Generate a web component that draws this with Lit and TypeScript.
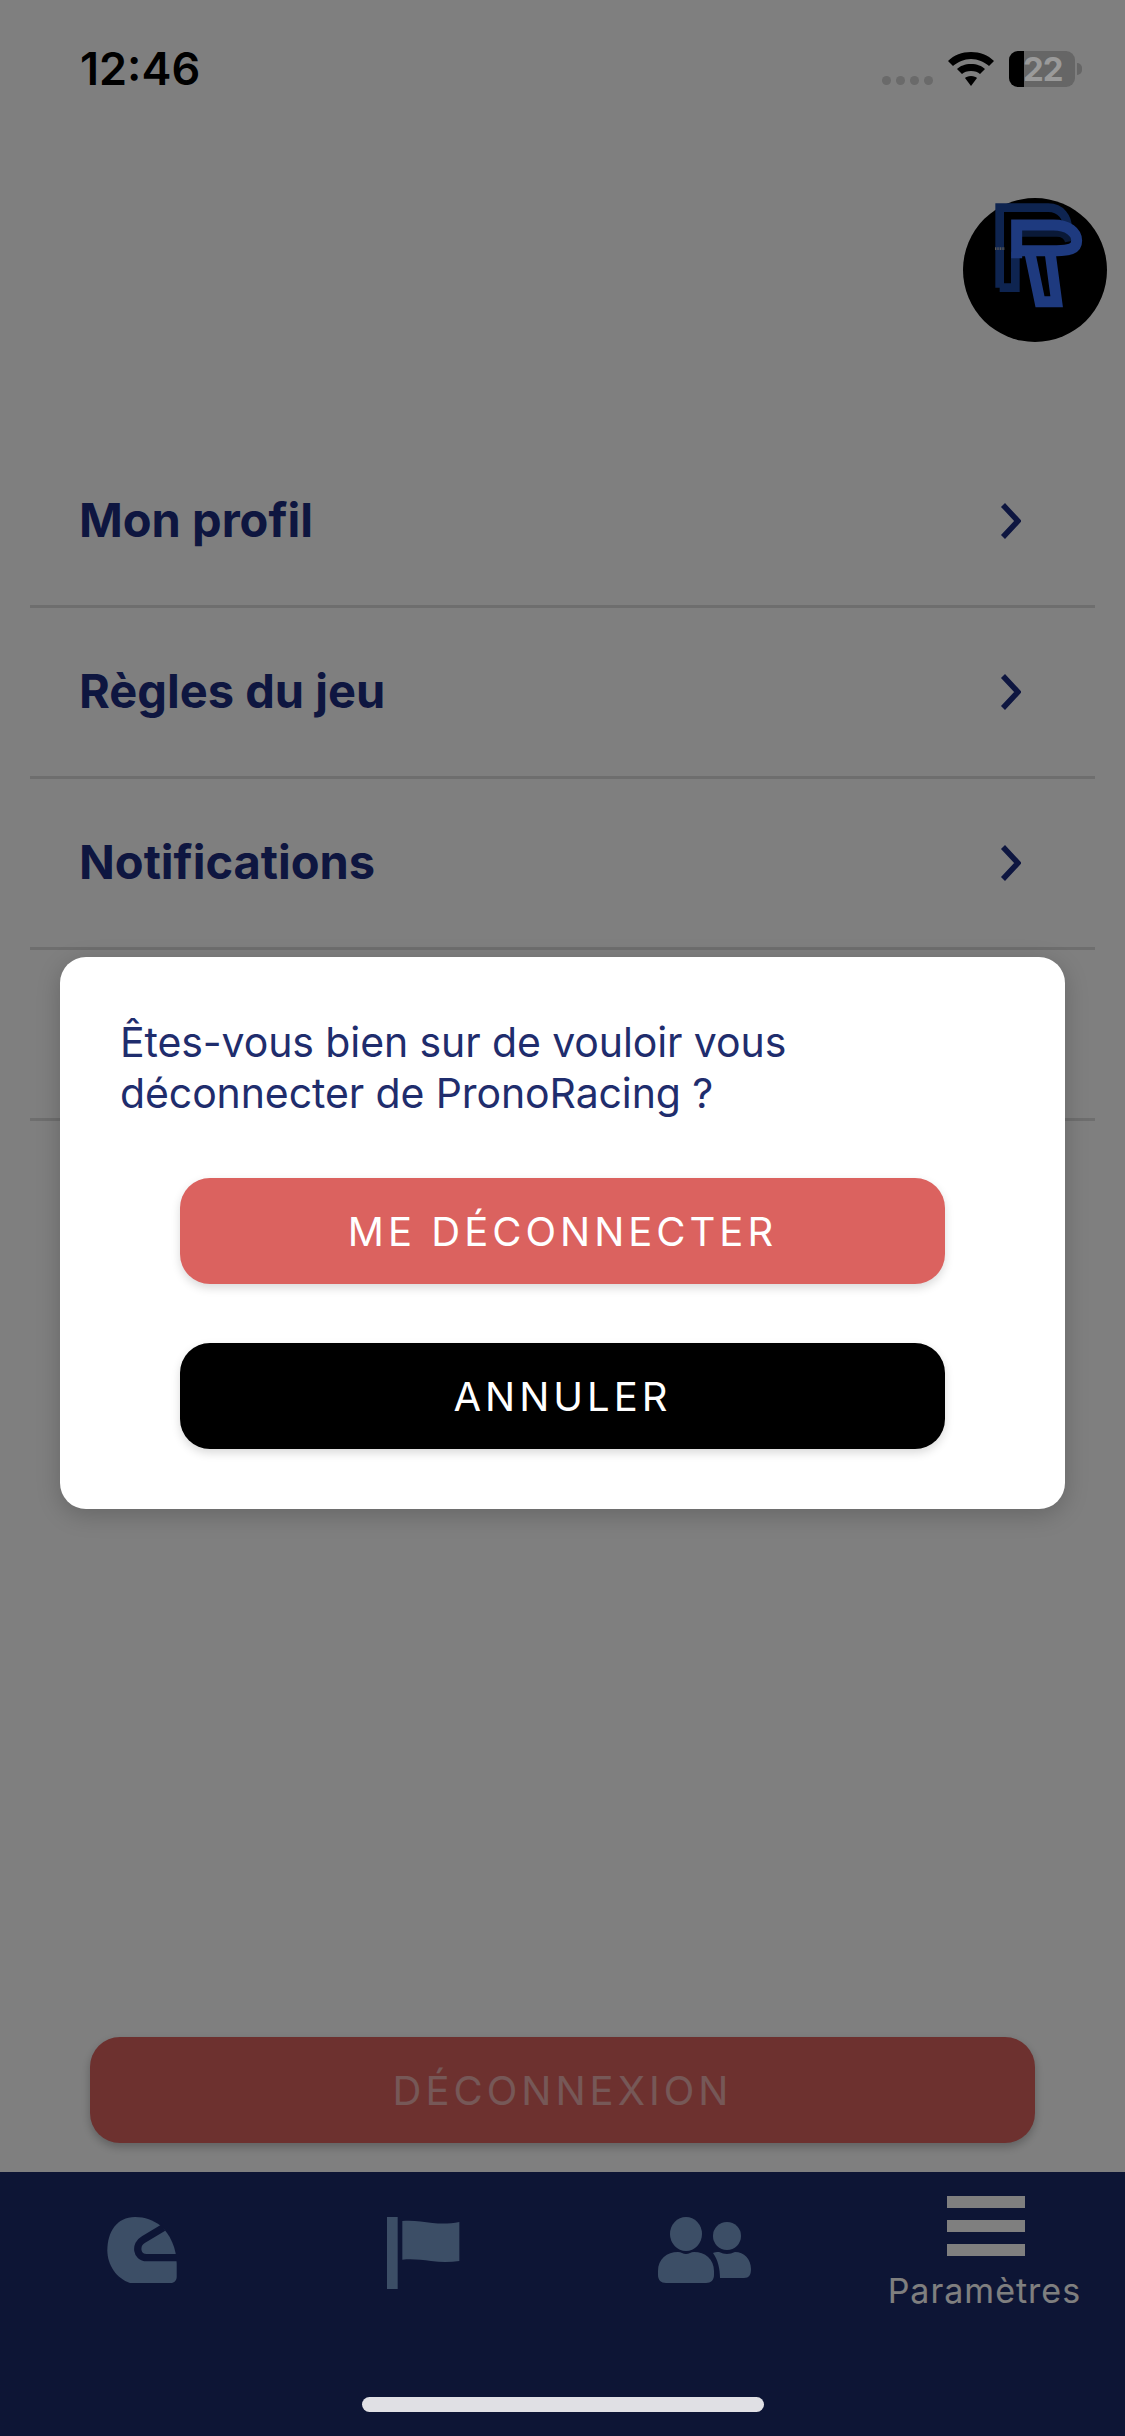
import { LitElement, css, html, svg } from "lit"
import { customElement } from "lit/decorators.js"

const menu = ["Mon profil", "Règles du jeu", "Notifications", ""]

// visor band is cut out with the bar colour
const helmet = svg`
  <path d="M165 140C110 140 82 185 82 240c0 45 28 85 68 98h122c11 0 18-8 18-18v-40c0-45-20-90-50-115-20-15-45-25-75-25Z" fill="#799ccc" />
  <path d="M250 172l-60 36c-25 14-22 54 10 54h95" fill="none" stroke="#1b2a6b" stroke-width="22" />
`

const flag = svg`
  <rect x="921" y="140" width="32" height="216" />
  <path d="M967 152c30-3 60 2 90 6 30 3 55 2 81-3v117c-28 4-55 4-85 0-30-4-58-7-86-4Z" />
`

const people = svg`
  <ellipse cx="28" cy="17" rx="16" ry="17" />
  <circle cx="69" cy="19" r="14" />
  <path d="M0 54c0-12 9-19 20-19 3 0 5 2 8 2s5-2 8-2c11 0 20 7 20 19v4c0 5-3 8-8 8H8c-5 0-8-3-8-8Z" />
  <path d="M55 36c2-1 3-1 6-1 3 1 5 2 8 2s5-1 8-2c9 0 16 7 16 17 0 6-2 9-7 9H62c0-9-2-18-7-25Z" />
`

@customElement("app-root")
export class AppRoot extends LitElement {
  static styles = css`
    :host {
      display: block;
      position: relative;
      width: 1125px;
      height: 2436px;
      overflow: hidden;
      background: #fff;
      font-family: Inter, "Liberation Sans", sans-serif;
    }

    .screen {
      display: flex;
      flex-direction: column;
      height: 100%;
    }

    .status {
      display: flex;
      justify-content: space-between;
      align-items: center;
      height: 87px;
      padding: 25px 43px 0 80px;
      margin-bottom: -7px;
    }
    .time {
      font-size: 45px;
      font-weight: 600;
      line-height: 44px;
      color: #000;
    }
    /* these stay lit above the dimming layer */
    .status-icons {
      position: relative;
      z-index: 2;
      display: flex;
      align-items: center;
      gap: 15px;
    }
    .dots {
      display: flex;
      gap: 5px;
      align-self: flex-end;
      margin-bottom: 2px;
    }
    .dots i {
      width: 9px;
      height: 9px;
      border-radius: 50%;
      background: #6a6a6a;
    }
    .battery {
      display: flex;
      align-items: center;
      gap: 2px;
    }
    .battery-body {
      position: relative;
      width: 66px;
      height: 36px;
      border-radius: 9px;
      background: #666;
      padding-left: 14px;
      box-sizing: border-box;
      font-size: 33px;
      font-weight: 700;
      letter-spacing: -1px;
      color: #9a9a9a;
      line-height: 37px;
      white-space: nowrap;
    }
    .battery-body::before {
      content: "";
      position: absolute;
      left: 0;
      top: 0;
      bottom: 0;
      width: 15px;
      border-radius: 9px 0 0 9px;
      background: #000;
    }
    .battery-body span {
      position: relative;
    }
    .battery-nub {
      width: 5px;
      height: 12px;
      border-radius: 0 6px 6px 0;
      background: #666;
    }

    .top {
      display: flex;
      justify-content: flex-end;
      padding: 93px 18px 0 0;
    }
    .avatar {
      display: block;
      width: 144px;
      height: 144px;
    }

    .menu {
      margin: 95px 30px 0;
    }
    .row {
      display: flex;
      align-items: center;
      justify-content: space-between;
      box-sizing: border-box;
      height: 171px;
      padding: 0 74px 0 49px;
      border-bottom: 3px solid #dcdcdc;
      font-size: 47px;
      font-weight: 700;
      color: #1c2c80;
    }
    .row span {
      margin-bottom: 3px;
    }
    .row svg {
      display: block;
      width: 21px;
      height: 36px;
    }

    .logout {
      margin: auto 90px 29px;
      height: 106px;
      border-radius: 30px;
      background: #db625f;
      box-shadow: 0 4px 10px rgba(0, 0, 0, 0.25);
      display: flex;
      align-items: center;
      justify-content: center;
      font-size: 40px;
      font-weight: 400;
      letter-spacing: 4px;
      color: rgba(255, 255, 255, 0.5);
    }

    .tabs {
      display: grid;
      grid-template-columns: repeat(4, 1fr);
      height: 264px;
      background: #1b2a6b;
    }
    .tab {
      display: flex;
      flex-direction: column;
      align-items: center;
      padding: 45px 0 0 3px;
    }
    .tab svg {
      display: block;
      fill: #799ccc;
    }
    .tab.active {
      padding: 24px 0 0;
      color: #fff;
      font-size: 34px;
      line-height: 44px;
      letter-spacing: 1px;
    }
    .burger {
      display: flex;
      flex-direction: column;
      gap: 12px;
      width: 78px;
      margin: 0 0 13px 3px;
    }
    .burger i {
      height: 12px;
      background: #fff;
    }

    .overlay {
      position: absolute;
      inset: 0;
      z-index: 1;
      display: flex;
      flex-direction: column;
      padding: 957px 60px 0;
      background: rgba(0, 0, 0, 0.5);
    }
    .dialog {
      box-sizing: border-box;
      height: 552px;
      padding: 60px 60px 0;
      border-radius: 26px;
      background: #fff;
      box-shadow: 0 6px 24px rgba(0, 0, 0, 0.2);
    }
    .dialog p {
      margin: 0 0 59px;
      font-size: 41px;
      line-height: 51px;
      letter-spacing: -0.1px;
      color: #1f2d6d;
    }
    .actions {
      display: flex;
      flex-direction: column;
      gap: 59px;
      padding: 0 60px;
    }
    .btn {
      all: unset;
      display: flex;
      align-items: center;
      justify-content: center;
      height: 106px;
      border-radius: 30px;
      font-size: 40px;
      font-weight: 400;
      letter-spacing: 4px;
      color: #fff;
      box-shadow: 0 4px 10px rgba(0, 0, 0, 0.15);
    }
    .btn.danger {
      background: #db625f;
    }
    .btn.cancel {
      background: #000;
    }

    .home {
      position: absolute;
      z-index: 2;
      left: 362px;
      top: 2397px;
      width: 402px;
      height: 15px;
      border-radius: 8px;
      background: #e0e0e4;
    }
  `

  render() {
    return html`
      <div class="screen">
        <div class="status">
          <span class="time">12:46</span>
          <div class="status-icons">
            <div class="dots"><i></i><i></i><i></i><i></i></div>
            <svg width="46" height="34" viewBox="0 0 46 34">
              <path d="M23 0C14 0 6 3 0 9l5 5c5-4 11-7 18-7s13 3 18 7l5-5C40 3 32 0 23 0Z" />
              <path d="M23 12c-6 0-11 2-14 5l5 5c2-2 5-3 9-3s7 1 9 3l5-5c-3-3-8-5-14-5Z" />
              <path d="M23 24c-3 0-5 1-6 2l6 8 6-8c-1-1-3-2-6-2Z" />
            </svg>
            <div class="battery">
              <div class="battery-body"><span>22</span></div>
              <div class="battery-nub"></div>
            </div>
          </div>
        </div>

        <div class="top">
          <svg class="avatar" viewBox="0 0 144 144">
            <circle cx="72" cy="72" r="72" fill="#000" />
            <g transform="translate(22 -3) scale(.3333)" fill="none">
              <g stroke="#1c48a0" stroke-width="26">
                <path d="M44 278V38h146c38 0 58 30 58 62" />
                <path d="M44 278h47V170" />
              </g>
              <path d="M110 115h105c20 0 32 10 35 25" stroke="#14336f" stroke-width="20" />
              <g stroke="#3c74ff" stroke-width="33">
                <path d="M95 190V90h110c45 0 70 22 70 47 0 26-25 30-60 30H95" />
                <path d="M135 175l30 145h50l-20-150" />
              </g>
              <path d="M30 161h30" stroke="#b0b0b0" stroke-width="8" stroke-dasharray="3 2" />
            </g>
          </svg>
        </div>

        <div class="menu">
          ${menu.map(
            (label, i) => html`
              <div class="row">
                <span>${label}</span>
                ${i < 3
                  ? html`<svg viewBox="0 0 21 36">
                      <path d="M3 2l15 16L3 34" fill="none" stroke="currentColor" stroke-width="5.5" />
                    </svg>`
                  : null}
              </div>
            `
          )}
        </div>

        <div class="logout">DÉCONNEXION</div>

        <nav class="tabs">
          <div class="tab">
            <svg width="70" height="66" viewBox="82 140 208 198">${helmet}</svg>
          </div>
          <div class="tab">
            <svg width="73" height="72" viewBox="921 140 219 216">${flag}</svg>
          </div>
          <div class="tab">
            <svg width="93" height="66" viewBox="0 0 93 66">${people}</svg>
          </div>
          <div class="tab active">
            <div class="burger"><i></i><i></i><i></i></div>
            <span>Paramètres</span>
          </div>
        </nav>
      </div>

      <div class="overlay">
        <div class="dialog">
          <p>Êtes-vous bien sur de vouloir vous<br />déconnecter de PronoRacing ?</p>
          <div class="actions">
            <button class="btn danger">ME DÉCONNECTER</button>
            <button class="btn cancel">ANNULER</button>
          </div>
        </div>
      </div>

      <div class="home"></div>
    `
  }
}
